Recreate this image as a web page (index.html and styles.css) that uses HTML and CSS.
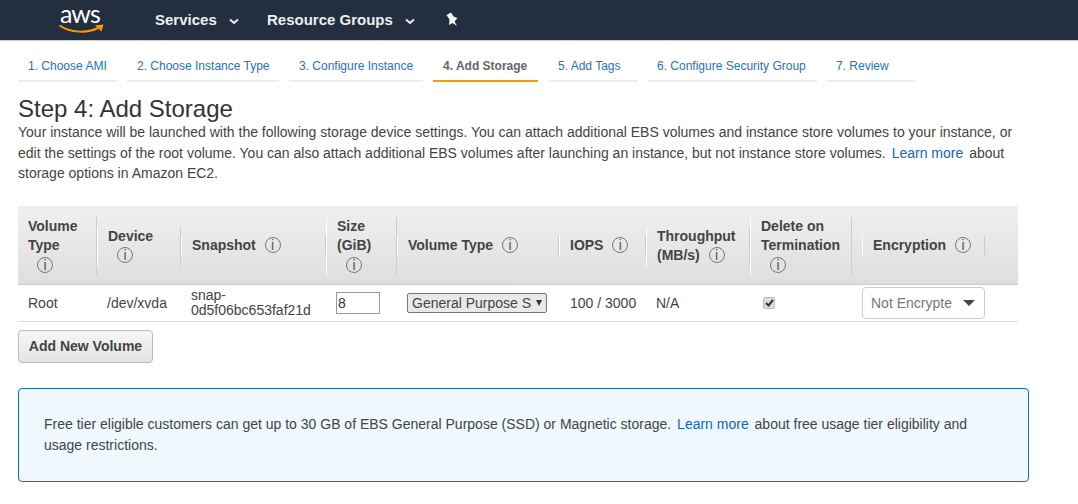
FILE: index.html
```html
<!DOCTYPE html>
<html lang="en">
<head>
    <meta charset="UTF-8">
    <title>Step 4: Add Storage</title>
    <link rel="stylesheet" href="styles.css">
</head>
<body>
    <header class="topbar">
        <div class="logo">
            <span class="logo-text">aws</span>
            <svg class="logo-smile" width="45" height="10" viewBox="0 0 45 10">
                <path d="M0.500 1.500C12 9 28 9.500 39 4" fill="none" stroke="#f90" stroke-width="2"/>
                <path d="M36 1.500L44.500 0.500L42.500 7.500Z" fill="#f90"/>
            </svg>
        </div>
        <nav class="topnav">
            <a class="nav-services">Services <svg class="chev" width="10" height="7" viewBox="0 0 10 7"><path d="M1 1.500L5 5L9 1.500" fill="none" stroke="#eee" stroke-width="2"/></svg></a>
            <a class="nav-groups">Resource Groups <svg class="chev" width="10" height="7" viewBox="0 0 10 7"><path d="M1 1.500L5 5L9 1.500" fill="none" stroke="#eee" stroke-width="2"/></svg></a>
            <svg class="pin" width="14" height="15" viewBox="0 0 14 15"><path d="M1.500 3L6 0.500L8.500 4.500L12.500 6L9.500 9.500L12 14L7.500 11L4 13L4.500 7.500Z" fill="#f6f6f6"/></svg>
        </nav>
    </header>

    <main class="content">
        <ul class="wizard">
            <li class="tab tab-1">1. Choose AMI</li>
            <li class="tab tab-2">2. Choose Instance Type</li>
            <li class="tab tab-3">3. Configure Instance</li>
            <li class="tab tab-4 active">4. Add Storage</li>
            <li class="tab tab-5">5. Add Tags</li>
            <li class="tab tab-6">6. Configure Security Group</li>
            <li class="tab tab-7">7. Review</li>
        </ul>

        <h1>Step 4: Add Storage</h1>
        <p class="intro">Your instance will be launched with the following storage device settings. You can attach additional EBS volumes and instance store volumes to your instance, or edit the settings of the root volume. You can also attach additional EBS volumes after launching an instance, but not instance store volumes. <a class="link">Learn more</a> about storage options in Amazon EC2.</p>

        <table class="volumes">
            <colgroup>
                <col class="c1"><col class="c2"><col class="c3"><col class="c4"><col class="c5"><col class="c6"><col class="c7"><col class="c8"><col class="c9">
            </colgroup>
            <thead>
                <tr>
                    <th><div class="th-in first">Volume Type<br><span class="info below">i</span></div></th>
                    <th><div class="th-in">Device<br><span class="info below">i</span></div></th>
                    <th><div class="th-in">Snapshot <span class="info">i</span></div></th>
                    <th><div class="th-in">Size (GiB)<br><span class="info below">i</span></div></th>
                    <th><div class="th-in">Volume Type <span class="info">i</span></div></th>
                    <th><div class="th-in">IOPS <span class="info">i</span></div></th>
                    <th><div class="th-in">Throughput (MB/s) <span class="info">i</span></div></th>
                    <th><div class="th-in">Delete on Termination<br><span class="info below">i</span></div></th>
                    <th><div class="th-in enc">Encryption <span class="info">i</span></div></th>
                </tr>
            </thead>
            <tbody>
                <tr>
                    <td>Root</td>
                    <td>/dev/xvda</td>
                    <td class="snap">snap-<br>0d5f06bc653faf21d</td>
                    <td><input class="size" type="text" value="8"></td>
                    <td>
                        <div class="select-wrap">
                            <select class="vol-select"><option>General Purpose SSD (gp2)</option></select>
                        </div>
                    </td>
                    <td class="iops">100 / 3000</td>
                    <td>N/A</td>
                    <td>
                        <span class="check"><svg width="9" height="8" viewBox="0 0 9 8"><path d="M1 4L3.500 6.500L8 1" fill="none" stroke="#333" stroke-width="2"/></svg></span>
                    </td>
                    <td>
                        <div class="enc-select"><span class="enc-text">Not Encrypted</span><span class="caret"></span></div>
                    </td>
                </tr>
            </tbody>
        </table>

        <button class="add-btn" type="button">Add New Volume</button>

        <div class="notice">
            Free tier eligible customers can get up to 30 GB of EBS General Purpose (SSD) or Magnetic storage. <a class="link">Learn more</a> about free usage tier eligibility and usage restrictions.
        </div>
    </main>
</body>
</html>
```

FILE: styles.css
```css
body {
    margin: 0;
    font-family: "Liberation Sans", Arial, sans-serif;
    font-size: 14px;
    color: #444;
    background-color: #fff;
}

/* top bar */
.topbar {
    display: flex;
    height: 40px;
    background-color: #232f3e;
    border-bottom: 1px solid #ccc;
}
.logo {
    width: 155px;
    padding-left: 59px;
    box-sizing: border-box;
    display: flex;
    flex-direction: column;
    align-items: flex-start;
}
.logo-text {
    font-family: Lato, sans-serif;
    font-size: 25px;
    line-height: 22px;
    letter-spacing: -1px;
    color: #fff;
    margin: 2px 0 0 1px;
}
.logo-smile {
    margin-top: 0;
}
.topnav {
    display: flex;
    align-items: center;
    padding-bottom: 2px;
    font-weight: bold;
    font-size: 15px;
    color: #eee;
}
.nav-services {
    width: 112px;
}
.nav-groups {
    width: 178px;
}
.chev {
    margin-left: 8px;
}

/* wizard tabs */
.content {
    padding-left: 18px;
}
.wizard {
    display: flex;
    gap: 10px;
    list-style: none;
    margin: 0;
    padding: 12px 0 0;
}
.tab {
    box-sizing: border-box;
    height: 29px;
    padding: 6px 0 0 10px;
    font-size: 12px;
    color: #2673b8;
    border-bottom: 2px solid #eee;
}
.tab-1 { width: 99px; }
.tab-2 { width: 152px; }
.tab-3 { width: 134px; }
.tab-4 { width: 105px; }
.tab-5 { width: 90px; }
.tab-6 { width: 169px; padding-left: 9px; }
.tab-7 { width: 89px; padding-left: 9px; }
.tab.active {
    font-weight: bold;
    color: #666;
    border-bottom-color: #f90;
}

h1 {
    margin: 13px 0 -1px;
    font-size: 24px;
    font-weight: normal;
    line-height: 28px;
    color: #333;
}
.intro {
    width: 1010px;
    margin: 0;
    line-height: 20.5px;
}
.link {
    color: #1166bb;
    margin: 0 2px;
}

/* volumes table */
.volumes {
    width: 1000px;
    margin-top: 22px;
    table-layout: fixed;
    border-collapse: collapse;
}
.c1 { width: 79px; }
.c2 { width: 84px; }
.c3 { width: 145px; }
.c4 { width: 71px; }
.c5 { width: 162px; }
.c6 { width: 87px; }
.c7 { width: 104px; }
.c8 { width: 102px; }
.c9 { width: 166px; }
.volumes th {
    height: 75px;
    padding: 3px 0 0;
    text-align: left;
    vertical-align: middle;
    background: linear-gradient(#f0f0f0, #dedede);
    border-bottom: 1px solid #ccc;
}
.th-in {
    box-sizing: border-box;
    padding: 0 10px;
    line-height: 19.5px;
    font-weight: bold;
    color: #444;
    border-left: 1px solid #fff;
    border-right: 1px solid #ccc;
}
.th-in.first {
    border-left: none;
}
.th-in.enc {
    width: 123px;
    margin-left: 10px;
}
.info {
    display: inline-block;
    box-sizing: border-box;
    width: 16px;
    height: 16px;
    margin-left: 5px;
    overflow: hidden;
    border: 1px solid #777;
    border-radius: 50%;
    font-size: 14px;
    font-weight: normal;
    line-height: 14px;
    text-align: center;
    vertical-align: -3px;
    color: #555;
}
.info.below {
    margin-left: 9px;
}
.volumes td {
    height: 35px;
    padding: 0 0 0 10px;
    vertical-align: middle;
    border-bottom: 1px solid #ddd;
}
.volumes .snap {
    line-height: 15px;
    padding-top: 1px;
}
.volumes .iops {
    padding-left: 11px;
}
.size {
    box-sizing: border-box;
    display: block;
    width: 44px;
    height: 22px;
    padding: 0 1px;
    font: 14px "Liberation Sans", Arial, sans-serif;
    color: #333;
    border: 1px solid #999;
}
.select-wrap {
    position: relative;
    width: 140px;
}
.select-wrap::after {
    content: "";
    position: absolute;
    right: 5px;
    top: 7px;
    border-left: 3px solid transparent;
    border-right: 3px solid transparent;
    border-top: 6px solid #333;
}
.vol-select {
    appearance: none;
    display: block;
    box-sizing: border-box;
    width: 140px;
    height: 20px;
    padding: 0 14px 0 4px;
    font: 14px "Liberation Sans", Arial, sans-serif;
    color: #444;
    background-color: #e9e9e9;
    border: 1px solid #777;
    border-radius: 2px;
}
.check {
    display: flex;
    align-items: center;
    justify-content: center;
    box-sizing: border-box;
    width: 12px;
    height: 12px;
    margin-left: 3px;
    background-color: #ddd;
    border: 1px solid #bbb;
    border-radius: 2px;
}
.enc-select {
    display: flex;
    align-items: center;
    box-sizing: border-box;
    width: 123px;
    height: 32px;
    padding-left: 8px;
    background-color: #fff;
    border: 1px solid #ccc;
    border-radius: 4px;
    color: #777;
}
.enc-text {
    width: 81px;
    overflow: hidden;
    white-space: nowrap;
}
.caret {
    margin-left: 11px;
    border-left: 6px solid transparent;
    border-right: 6px solid transparent;
    border-top: 6px solid #444;
}

.add-btn {
    display: block;
    width: 135px;
    height: 33px;
    margin-top: 8px;
    padding: 0;
    font: bold 14px "Liberation Sans", Arial, sans-serif;
    color: #444;
    background: linear-gradient(#f6f6f6, #e4e4e4);
    border: 1px solid #bbb;
    border-radius: 4px;
}

.notice {
    box-sizing: border-box;
    width: 1011px;
    height: 94px;
    margin-top: 25px;
    padding: 25px 25px;
    line-height: 21px;
    background-color: #f0f8ff;
    border: 1px solid #0f6dbb;
    border-radius: 4px;
}
```
